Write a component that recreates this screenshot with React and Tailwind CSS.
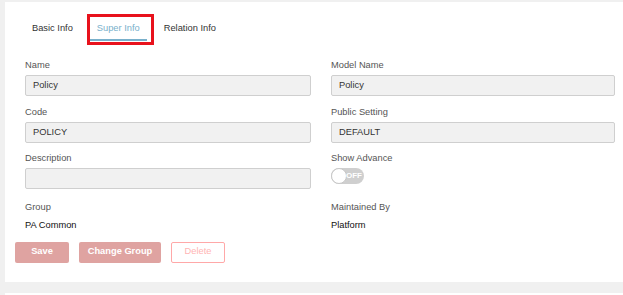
export default function App() {
  const font = { fontFamily: '"Liberation Sans", Arial, sans-serif' };
  const Field = ({ label, value }) => (
    <div className="flex flex-col">
      <div className="h-[14px] leading-[14px] text-[#555] mb-[3px]">{label}</div>
      <div className="h-[21px] rounded-[2px] border border-[#cfcfcf] bg-[#f1f1f1] px-[7px] leading-[19px] text-[#333]">
        {value}
      </div>
    </div>
  );
  return (
    <div className="w-[623px] h-[295px] bg-[#f0f0f0] pt-[2px] pl-[5px] overflow-hidden text-[9.3px]" style={font}>
      <div className="bg-white pt-[16px] pb-[19px]">
        <div className="flex gap-[10px] pl-[20px] h-[23px]">
          <div className="px-[7px] h-[23px] leading-[21px] text-[#333]">Basic Info</div>
          <div className="relative px-[7px] h-[23px] leading-[21px] text-[#79b0cb] border-b-2 border-[#79b0cb]">
            Super Info
            <div className="absolute left-[-3px] right-[-7px] top-[-4px] bottom-[-6px] border-[3px] border-[#e8121c]"></div>
          </div>
          <div className="px-[7px] h-[23px] leading-[21px] text-[#333]">Relation Info</div>
        </div>
        <div className="grid grid-cols-[286px_284px] gap-x-[20px] gap-y-[8.5px] pl-[20px] mt-[17px]">
          <Field label="Name" value="Policy" />
          <Field label="Model Name" value="Policy" />
          <Field label="Code" value="POLICY" />
          <Field label="Public Setting" value="DEFAULT" />
          <Field label="Description" value="" />
          <div className="flex flex-col">
            <div className="h-[14px] leading-[14px] text-[#555] mb-[3px]">Show Advance</div>
            <div className="relative w-[33px] h-[16px] rounded-full bg-[#cfcfcf]">
              <div className="absolute left-0 top-0 w-[16px] h-[16px] rounded-full bg-white border border-[#c8c8c8]"></div>
              <div className="absolute left-[15px] top-0 leading-[16px] text-[8px] font-bold text-white">OFF</div>
            </div>
          </div>
          <div className="flex flex-col pt-[2px]">
            <div className="h-[14px] leading-[14px] text-[#555] mb-[4px]">Group</div>
            <div className="h-[14px] leading-[14px] text-[#111]">PA Common</div>
          </div>
          <div className="flex flex-col pt-[2px]">
            <div className="h-[14px] leading-[14px] text-[#555] mb-[4px]">Maintained By</div>
            <div className="h-[14px] leading-[14px] text-[#111]">Platform</div>
          </div>
        </div>
        <div className="flex gap-[10px] pl-[10px] mt-[10px]">
          <div className="w-[54px] h-[21px] rounded-[2px] bg-[#dfa3a1] text-white font-bold flex items-center justify-center">Save</div>
          <div className="w-[82px] h-[21px] rounded-[2px] bg-[#dfa3a1] text-white font-bold flex items-center justify-center">Change Group</div>
          <div className="w-[54px] h-[21px] rounded-[2px] border border-[#ffa8a8] text-[#ffb4b4] flex items-center justify-center">Delete</div>
        </div>
      </div>
      <div className="bg-white h-[20px] mt-[11px]"></div>
    </div>
  );
}
